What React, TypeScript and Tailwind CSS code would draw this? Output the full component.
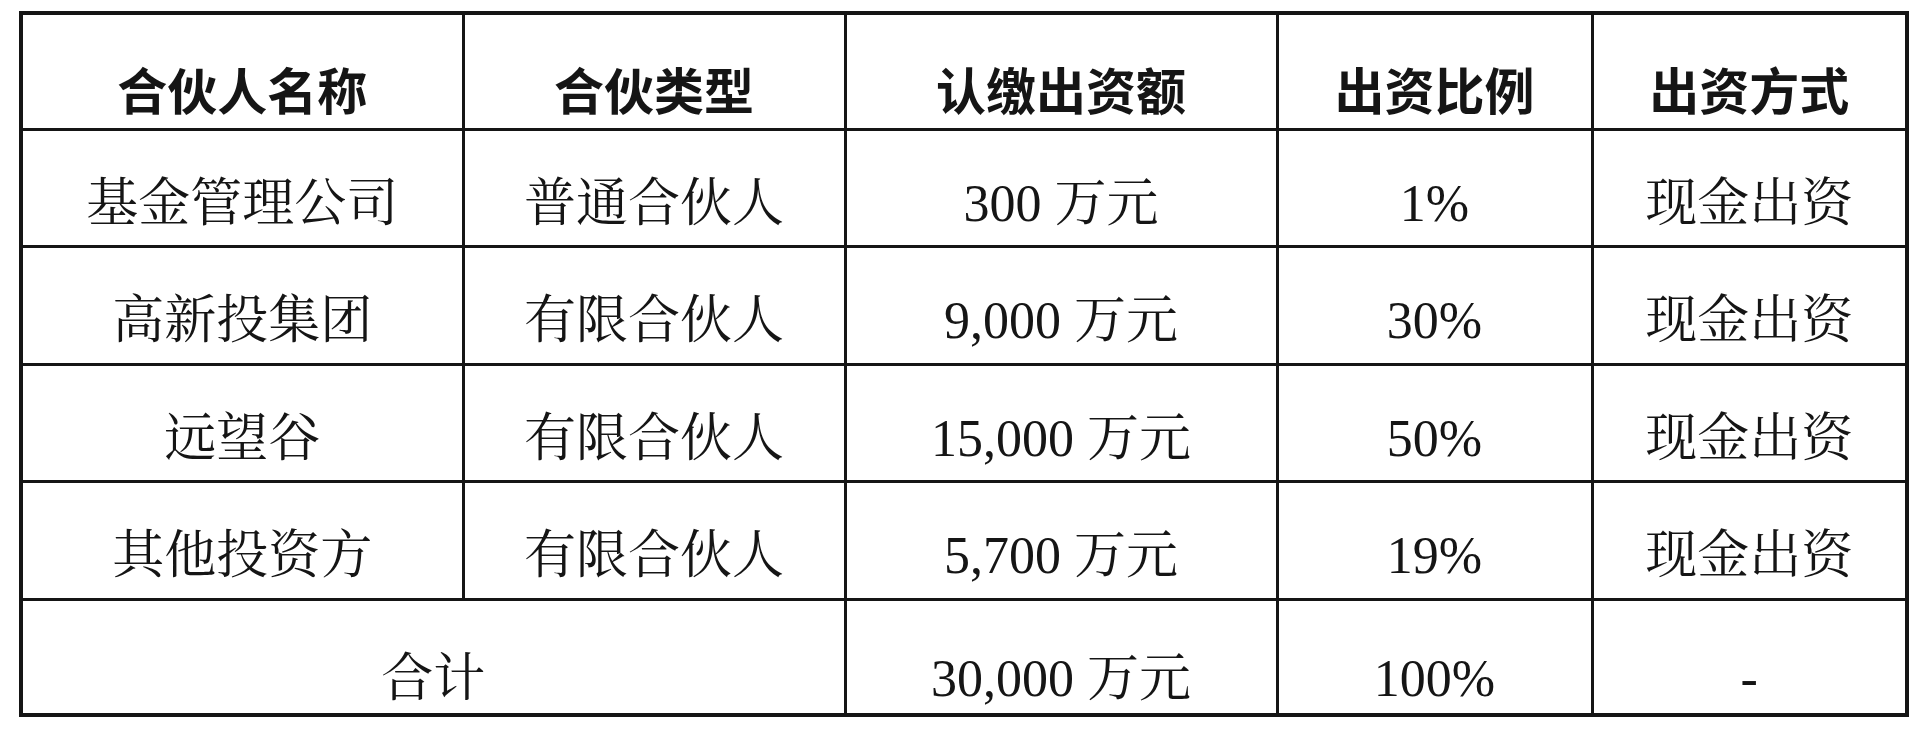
const headers = ['合伙人名称', '合伙类型', '认缴出资额', '出资比例', '出资方式'];

const rows = [
  { name: '基金管理公司', type: '普通合伙人', amount: '300', ratio: '1%', way: '现金出资', h: 'h-[117px]' },
  { name: '高新投集团', type: '有限合伙人', amount: '9,000', ratio: '30%', way: '现金出资', h: 'h-[118px]' },
  { name: '远望谷', type: '有限合伙人', amount: '15,000', ratio: '50%', way: '现金出资', h: 'h-[117px]' },
  { name: '其他投资方', type: '有限合伙人', amount: '5,700', ratio: '19%', way: '现金出资', h: 'h-[118px]' },
];

const cell = 'border-[3px] border-[#151515] text-center align-top pt-[47px] leading-[52px]';

function Amount({ value }: { value: string }) {
  return (
    <span>
      {value}
      <span className="ml-[13px]">万元</span>
    </span>
  );
}

export default function App() {
  return (
    <div className="w-[1920px] h-[732px] bg-white pl-[19px] pt-[11px]">
      <div className="w-[1890px] h-[706px] border-[4px] border-[#151515]">
        <table
          className="table-fixed border-collapse border-hidden w-[1882px] text-[52px] text-[#151515]"
          style={{ fontFamily: '"Liberation Serif", "Noto Serif CJK SC", "Noto Sans CJK SC", serif' }}
        >
          <colgroup>
            <col className="w-[440px]" />
            <col className="w-[382px]" />
            <col className="w-[432px]" />
            <col className="w-[315px]" />
            <col className="w-[313px]" />
          </colgroup>
          <thead>
            <tr className="h-[114px]">
              {headers.map((t) => (
                <th
                  key={t}
                  className={`${cell} pt-[44px] font-bold font-['Noto_Sans_CJK_SC',sans-serif] text-[50px]`}
                >
                  {t}
                </th>
              ))}
            </tr>
          </thead>
          <tbody>
            {rows.map((r) => (
              <tr key={r.name} className={r.h}>
                <td className={cell}>{r.name}</td>
                <td className={cell}>{r.type}</td>
                <td className={cell}>
                  <Amount value={r.amount} />
                </td>
                <td className={cell}>{r.ratio}</td>
                <td className={cell}>{r.way}</td>
              </tr>
            ))}
            <tr className="h-[114px]">
              <td colSpan={2} className={`${cell} pt-[52px]`}>
                合计
              </td>
              <td className={`${cell} pt-[52px]`}>
                <Amount value="30,000" />
              </td>
              <td className={`${cell} pt-[52px]`}>100%</td>
              <td className={`${cell} pt-[52px]`}>-</td>
            </tr>
          </tbody>
        </table>
      </div>
    </div>
  );
}
